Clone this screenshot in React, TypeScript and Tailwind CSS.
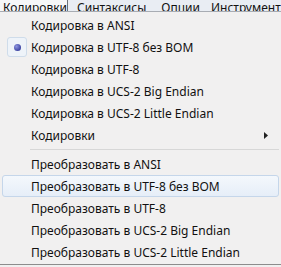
import React from 'react';

type Item = { label: string; checked?: boolean; submenu?: boolean; hover?: boolean } | 'sep';

const items: Item[] = [
    { label: 'Кодировка в ANSI' },
    { label: 'Кодировка в UTF-8 без BOM', checked: true },
    { label: 'Кодировка в UTF-8' },
    { label: 'Кодировка в UCS-2 Big Endian' },
    { label: 'Кодировка в UCS-2 Little Endian' },
    { label: 'Кодировки', submenu: true },
    'sep',
    { label: 'Преобразовать в ANSI' },
    { label: 'Преобразовать в UTF-8 без BOM', hover: true },
    { label: 'Преобразовать в UTF-8' },
    { label: 'Преобразовать в UCS-2 Big Endian' },
    { label: 'Преобразовать в UCS-2 Little Endian' },
];

const MenuRow: React.FC<{ item: Exclude<Item, 'sep'> }> = ({ item }) => (
    <div
        className={`relative flex items-center h-[22px] mx-[2px] rounded-[3px] border ${
            item.hover
                ? 'border-[#c5d6ea] bg-gradient-to-b from-[#f4f8fc] to-[#e6eef8]'
                : 'border-transparent'
        }`}
    >
        <div className="w-[28px] flex items-center justify-center">
            {item.checked && (
                <div className="w-[20px] h-[20px] rounded-[3px] border border-[#cfdcea] bg-[#eef3f9] flex items-center justify-center">
                    <div className="w-[7px] h-[7px] rounded-full bg-[radial-gradient(circle_at_35%_35%,#8d95e0,#1e248a)]" />
                </div>
            )}
        </div>
        <span className="flex-1 text-[#111] pt-[1px]">{item.label}</span>
        {item.submenu && (
            <svg className="mr-[10px]" width="4" height="7" viewBox="0 0 4 7">
                <polygon points="0 0 4 3.5 0 7" fill="#222" />
            </svg>
        )}
    </div>
);

export default function App() {
    return (
        <div
            className="w-[281px] h-[267px] overflow-hidden bg-[#f0f0f0] text-[12px] leading-none"
            style={{ fontFamily: '"Noto Sans", "Open Sans", sans-serif' }}
        >
            {/* Menu bar (cut at top) */}
            <div className="h-[12px] flex items-end bg-[#e9edf3] border-b border-[#a8acb3] text-[#111] overflow-hidden">
                <div className="h-[12px] w-[69px] flex items-end pl-[3px] bg-[#f6f7f8] border-r border-[#6d7177]">
                    <span className="-mb-[3px]">Кодировки</span>
                </div>
                <span className="ml-[9px] -mb-[3px]">Синтаксисы</span>
                <span className="ml-[15px] -mb-[3px]">Опции</span>
                <span className="ml-[11px] -mb-[3px] whitespace-nowrap">Инструменты</span>
            </div>
            {/* Dropdown */}
            <div className="bg-[#f1f0f0] pt-[2px] h-[253px] border-b border-[#8c8c8c]">
                {items.map((it, i) =>
                    it === 'sep' ? (
                        <div key={i} className="h-[7px] flex items-center pl-[30px] pr-[2px]">
                            <div className="w-full h-px bg-[#d7d7d7]" />
                        </div>
                    ) : (
                        <MenuRow key={i} item={it} />
                    )
                )}
            </div>
        </div>
    );
}
